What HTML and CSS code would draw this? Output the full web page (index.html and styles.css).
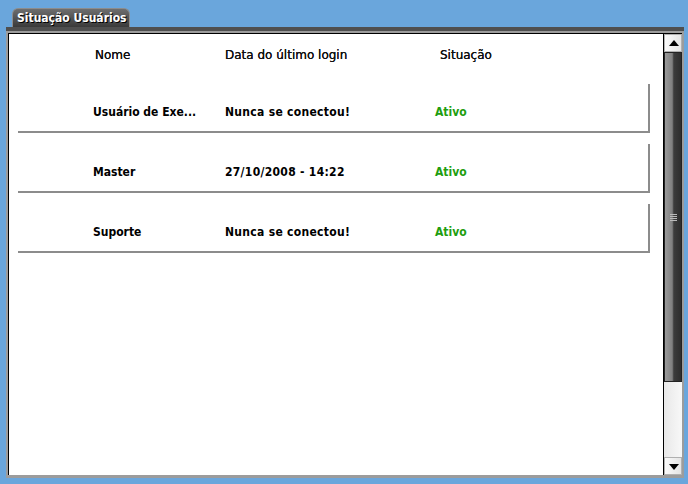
FILE: index.html
```html
<!DOCTYPE html>
<html lang="pt-BR">
<head>
  <meta charset="UTF-8" />
  <title>Situação Usuários</title>
  <link rel="stylesheet" href="styles.css">
</head>
<body>
  <div class="tab">Situação Usuários</div>
  <div class="window">
    <div class="panel">
      <div class="list">
        <div class="list-header">
          <span class="col-name">Nome</span>
          <span class="col-login">Data do último login</span>
          <span class="col-status">Situação</span>
        </div>

        <div class="row">
          <span class="col-name">Usuário de Exe...</span>
          <span class="col-login">Nunca se conectou!</span>
          <span class="col-status active">Ativo</span>
        </div>
        <div class="row">
          <span class="col-name">Master</span>
          <span class="col-login">27/10/2008 - 14:22</span>
          <span class="col-status active">Ativo</span>
        </div>
        <div class="row">
          <span class="col-name">Suporte</span>
          <span class="col-login">Nunca se conectou!</span>
          <span class="col-status active">Ativo</span>
        </div>
      </div>

      <div class="scrollbar">
        <div class="scroll-btn up"></div>
        <div class="scroll-thumb"><span class="grip"></span></div>
        <div class="scroll-track"></div>
        <div class="scroll-btn down"></div>
      </div>
    </div>
  </div>
</body>
</html>
```

FILE: styles.css
```css
body {
  margin: 0;
  padding: 0;
  background: #6aa6dc;
  font-family: 'DejaVu Sans Condensed', 'DejaVu Sans', sans-serif;
  font-size: 12px;
  color: #000;
  height: 484px;
  overflow: hidden;
}

.tab {
  margin: 8px 0 0 12px;
  width: 118px;
  height: 19px;
  line-height: 19px;
  padding-left: 4px;
  box-sizing: border-box;
  border: 1px solid #8c8c8c;
  border-bottom: none;
  border-radius: 6px 6px 0 0;
  background: linear-gradient(#6e6e6e, #3a3a3a);
  color: #fff;
  font-weight: bold;
  font-size: 12px;
  text-shadow: 1px 1px 0 #000;
  white-space: nowrap;
}

.window {
  margin: 0 4px 0 6px;
  height: 451px;
  box-sizing: border-box;
  border-top: 4px solid #4f4f4f;
  background: #9c9c9c;
  padding: 2px 2px 3px 2px;
}

.panel {
  height: 100%;
  box-sizing: border-box;
  border-left: 1px solid #000;
  border-top: 1px solid #000;
  background: #fff;
  display: flex;
}

.list {
  flex: 1;
  padding: 0 13px 0 9px;
}

/* cabecalho */
.list-header {
  display: flex;
  box-sizing: border-box;
  height: 41px;
  padding-top: 1px;
  align-items: center;
  margin-bottom: 9px;
  font-family: 'DejaVu Sans', sans-serif;
  color: #111;
  text-shadow: 0 0 0.3px #000;
}

.list-header .col-name {
  width: 130px;
  padding-left: 77px;
}

.list-header .col-login {
  width: 215px;
}

/* linhas */
.row {
  display: flex;
  align-items: center;
  box-sizing: border-box;
  height: 49px;
  padding-top: 8px;
  border-right: 2px solid #8c8c8c;
  border-bottom: 2px solid #8c8c8c;
  margin-bottom: 11px;
  font-weight: bold;
}

.col-name {
  width: 132px;
  padding-left: 75px;
}

.col-login {
  width: 210px;
}

.row .col-login {
  letter-spacing: 0.3px;
}

.active {
  color: #1f9e10;
}

/* barra de rolagem */
.scrollbar {
  width: 18px;
  display: flex;
  flex-direction: column;
  border-left: 1px solid #000;
}

.scroll-btn {
  height: 16px;
  border: 1px solid #b0b0b0;
  background: linear-gradient(to right, #fafafa, #e4e4e4);
  position: relative;
}

.scroll-btn::after {
  content: '';
  position: absolute;
  left: 4px;
  width: 0;
  height: 0;
  border-left: 5px solid transparent;
  border-right: 5px solid transparent;
}

.scroll-btn.up::after {
  top: 5px;
  border-bottom: 6px solid #000;
}

.scroll-btn.down::after {
  top: 6px;
  border-top: 6px solid #000;
}

.scroll-thumb {
  height: 328px;
  background: linear-gradient(to right, #9a9a9a, #808080 45%, #3c3c3c 55%, #2e2e2e);
  border: 1px solid #222;
  display: flex;
  align-items: center;
  justify-content: center;
}

.grip {
  width: 7px;
  height: 7px;
  background: repeating-linear-gradient(#bbb 0 1px, transparent 1px 2px);
}

.scroll-track {
  flex: 1;
  background: linear-gradient(to right, #e8e8e8, #f8f8f8);
}
```
